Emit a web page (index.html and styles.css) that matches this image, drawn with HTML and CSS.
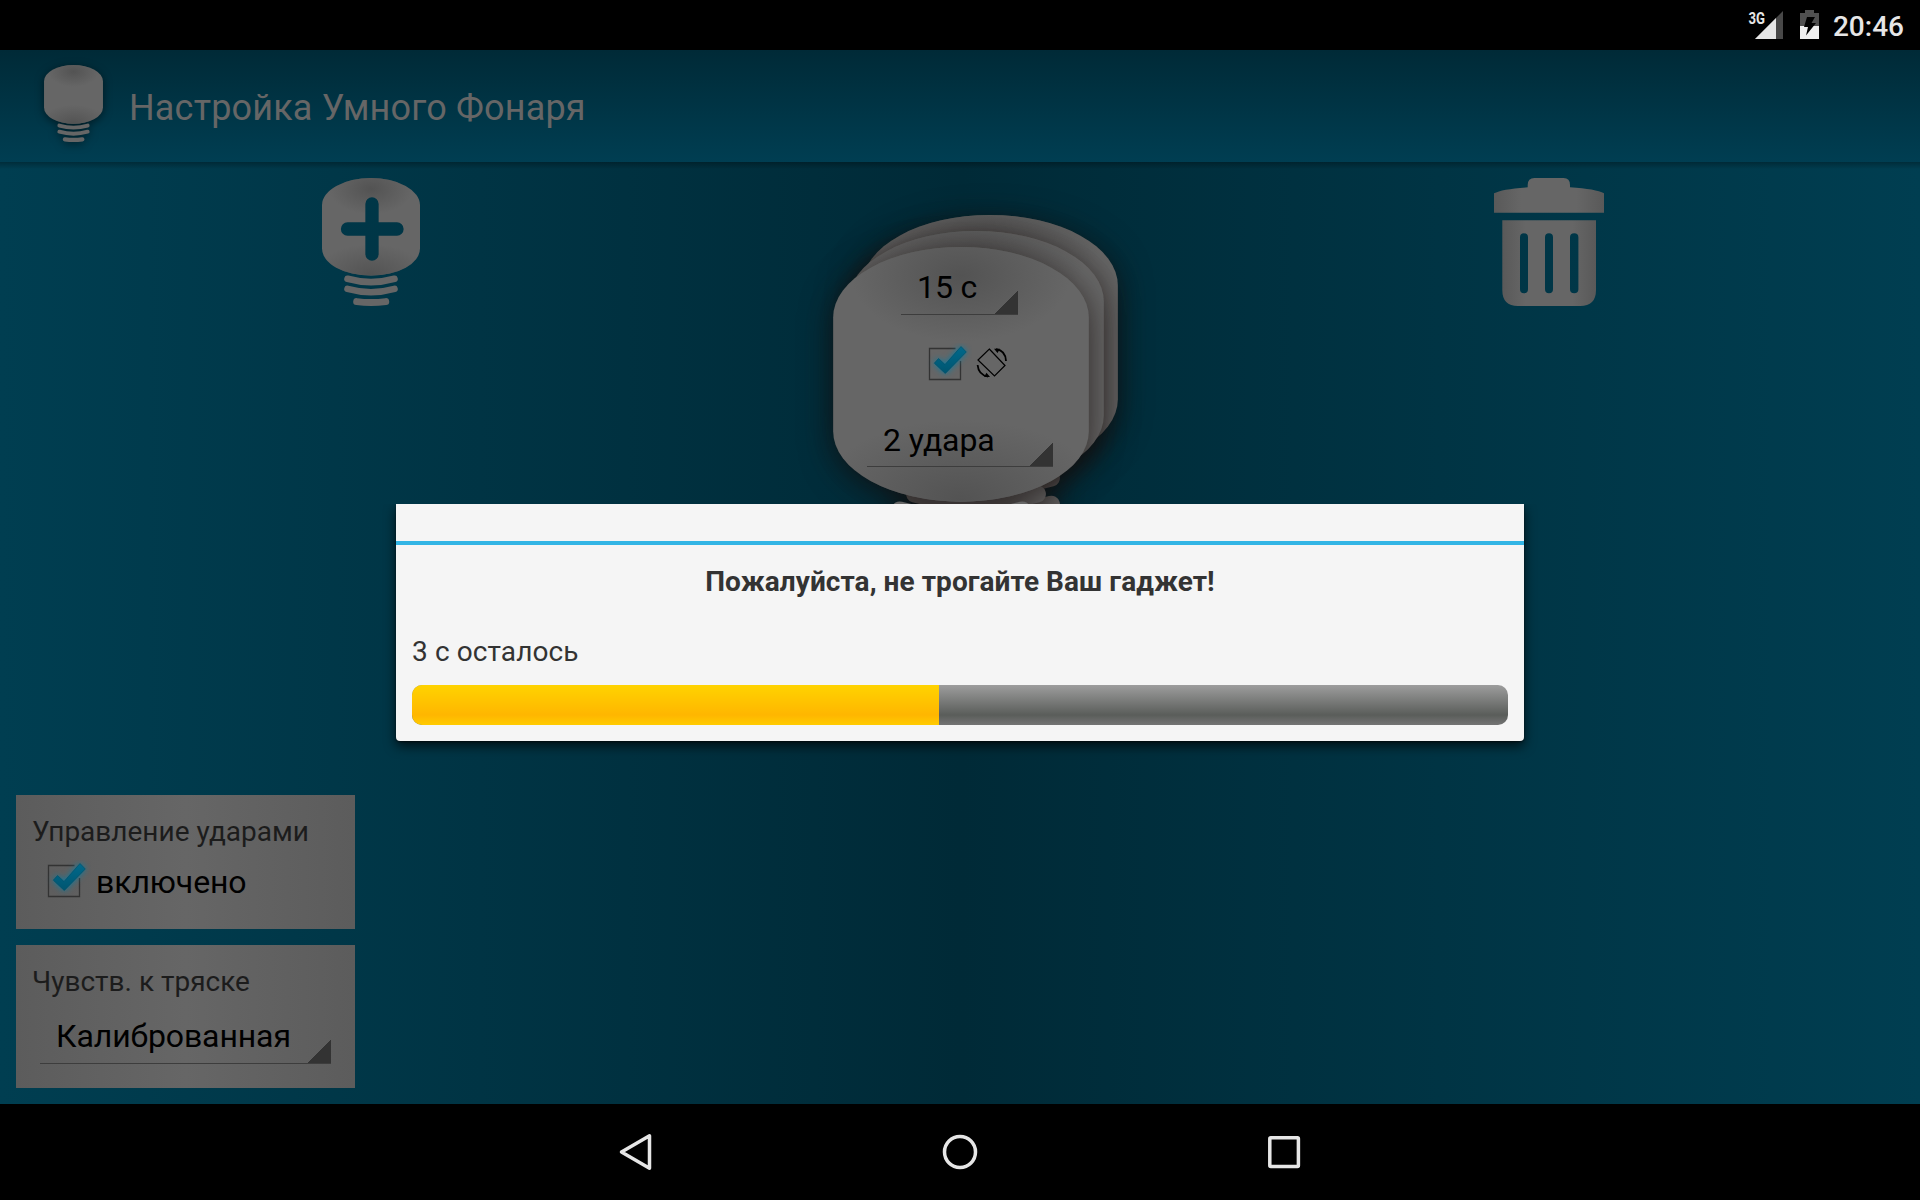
FILE: index.html
```html
<!DOCTYPE html>
<html lang="ru">
<head>
<meta charset="utf-8">
<title>Настройка Умного Фонаря</title>
<link rel="stylesheet" href="styles.css">
</head>
<body>
<svg class="defs" width="0" height="0" aria-hidden="true">
  <defs>
    <radialGradient id="glowTop" gradientUnits="userSpaceOnUse" cx="49" cy="11" r="42" gradientTransform="translate(0 4.4) scale(1 .6)"><stop offset="0" stop-color="#535353"/><stop offset="1" stop-color="#535353" stop-opacity="0"/></radialGradient>
    <radialGradient id="glowBottom" gradientUnits="userSpaceOnUse" cx="49" cy="97" r="56" gradientTransform="translate(0 43.65) scale(1 .55)"><stop offset="0" stop-color="#535353"/><stop offset="1" stop-color="#535353" stop-opacity="0"/></radialGradient>
    <linearGradient id="canShade"><stop offset="0" stop-color="#595959"/><stop offset=".25" stop-color="#666"/><stop offset=".75" stop-color="#666"/><stop offset="1" stop-color="#595959"/></linearGradient>
    <linearGradient id="tick" x1="0" y1="0" x2="0" y2="1"><stop offset="0" stop-color="#00698b"/><stop offset="1" stop-color="#005570"/></linearGradient>
    <mask id="plusCut"><rect width="98" height="130" fill="#fff"/><path d="M50 26V76M25.5 51H75" stroke="#000" stroke-width="13.3" stroke-linecap="round"/></mask>
  </defs>
  <symbol id="bulb" viewBox="0 0 98 128">
    <g fill="none" stroke="#666" stroke-linecap="round" stroke-width="6.6">
      <path d="M25.5 100.8Q49 107.4 72.5 100.8M25.5 110.9Q49 117.5 72.5 110.9"/><path d="M34.7 123.6Q49 125.4 63.7 123.6" stroke-width="7"/>
    </g>
    <path d="M0 27A49 27 0 0 1 98 27V70.600A49 27 0 0 1 0 70.600Z" fill="#666"/>
    <path d="M0 27A49 27 0 0 1 98 27V70.600A49 27 0 0 1 0 70.600Z" fill="url(#glowTop)"/>
    <path d="M0 27A49 27 0 0 1 98 27V70.600A49 27 0 0 1 0 70.600Z" fill="url(#glowBottom)"/>
  </symbol>
  <symbol id="check" viewBox="0 0 48 40">
    <path d="M31.5 5.500H5.500V36.500H36.500V18" fill="none" stroke="#333" stroke-width="1.3"/>
    <path class="tick-glow" d="M10.300 20.200L14.500 15.500L21 21.500L37 3.500L42.300 9L21.300 30.500Z" fill="url(#tick)" stroke="#00506a" stroke-width=".7"/>
  </symbol>
</svg>

<div class="screen">
  <div class="statusbar">
    <svg class="signal" width="36" height="34" viewBox="0 0 36 34">
      <path d="M7 32L35 4V32Z" fill="#484848"/><path d="M7 32L28 11V32Z" fill="#e6e6e6"/>
      <text x="0.500" y="16.500" textLength="16.500" lengthAdjust="spacingAndGlyphs">3G</text>
    </svg>
    <svg class="battery" width="19" height="29" viewBox="0 0 19 29">
      <path d="M0 3H5V0H14V3H19V16H0Z" fill="#505050"/><path d="M0 16H19V29H0Z" fill="#efefef"/>
      <path d="M7 7H15L11.500 13H16L6 25.500L8 17H4Z" fill="#000"/>
    </svg>
    <span class="clock">20:46</span>
  </div>

  <header class="appbar">
    <svg class="logo" width="59" height="77" viewBox="0 0 98 128"><use href="#bulb" width="98" height="128"/></svg>
    <h1>Настройка Умного Фонаря</h1>
  </header>

  <main class="content">
    <div class="toolbar">
      <svg class="add" width="98" height="128" viewBox="0 0 98 128"><g mask="url(#plusCut)"><use href="#bulb" width="98" height="128"/></g></svg>
      <div class="lamps">
        <svg class="lamp lamp-back" width="256" height="334"><use href="#bulb" width="256" height="334"/></svg>
        <svg class="lamp lamp-middle" width="256" height="334"><use href="#bulb" width="256" height="334"/></svg>
        <svg class="lamp lamp-front" width="256" height="334"><use href="#bulb" width="256" height="334"/></svg>
        <div class="lamp-form">
          <div class="spinner duration">15 с</div>
          <div class="rotate-row">
            <svg width="48" height="40"><use href="#check"/></svg>
            <svg class="rotate" width="32" height="32" viewBox="0 0 32 32" fill="none" stroke="#000">
              <path d="M13.300 2L29 18.500L18.500 29L2 13Z" stroke-width="1.2"/>
              <path d="M20 2.200Q29.500 3.500 30 14M12 29.500Q2.500 28 1.600 18" stroke-width="1.8"/>
              <path d="M18 1.700L24 1.700L21.500 6ZM14 30L8 30L10.500 25.800Z" fill="#000" stroke="none"/>
            </svg>
          </div>
          <div class="spinner taps">2 удара</div>
        </div>
      </div>
      <svg class="trash" width="110" height="128" viewBox="0 0 110 128" fill="url(#canShade)">
        <path d="M0 15.300Q8 11 33.700 9.300V7Q33.700 0 40.500 0H69.500Q76 0 76 7V9.300Q102 11 110 15.300V34.700H0Z"/>
        <path fill-rule="evenodd" d="M8.300 42.300H102V112Q102 128 86 128H24Q8.300 128 8.300 112ZM26 59.300V111.300a4 4 0 0 0 8 0V59.300a4 4 0 0 0-8 0ZM51 59.300V111.300a4 4 0 0 0 8 0V59.300a4 4 0 0 0-8 0ZM76 59.300V111.300a4.200 4 0 0 0 8.400 0V59.300a4.200 4 0 0 0-8.400 0Z"/>
      </svg>
    </div>

    <div class="settings">
      <section class="panel panel-taps">
        <h2>Управление ударами</h2>
        <div class="check-row"><svg width="48" height="40"><use href="#check"/></svg><span>включено</span></div>
      </section>
      <section class="panel panel-shake">
        <h2>Чувств. к тряске</h2>
        <div class="spinner sensitivity">Калиброванная</div>
      </section>
    </div>
  </main>

  <nav class="navbar">
    <svg width="40" height="40" viewBox="0 0 40 40"><path d="M5.500 20L33.500 3.800V36.200Z"/></svg>
    <svg width="40" height="40" viewBox="0 0 40 40"><circle cx="20" cy="20" r="15.500"/></svg>
    <svg width="40" height="40" viewBox="0 0 40 40"><rect x="5.800" y="5.800" width="28.600" height="28.600" rx="1"/></svg>
  </nav>

  <div class="dialog" role="dialog">
    <div class="dialog-head"></div>
    <div class="dialog-body">
      <p class="message">Пожалуйста, не трогайте Ваш гаджет!</p>
      <p class="remaining">3 с осталось</p>
      <div class="progress"><div class="progress-fill" style="width:527px"></div></div>
    </div>
  </div>
</div>
</body>
</html>
```
FILE: styles.css
```css
* { box-sizing: border-box; }
body { margin: 0; background: #000; font-family: Roboto, "Noto Sans", sans-serif; color: #000; }
h1, h2, p { margin: 0; font-weight: 400; }
svg { display: block; flex: none; }
.defs { position: absolute; }

.screen { position: relative; width: 1920px; height: 1200px; display: flex; flex-direction: column; overflow: hidden; }

/* System status bar */
.statusbar { height: 50px; flex: none; display: flex; justify-content: flex-end; align-items: flex-start; padding-right: 16px; background: #000; }
.signal { margin: 7px 16px 0 0; }
.signal text { font-size: 17px; font-weight: 700; fill: #e6e6e6; stroke: #000; stroke-width: 3px; paint-order: stroke; }
.battery { margin: 10px 14px 0 0; }
.clock { font-size: 28px; font-weight: 500; line-height: 32px; margin-top: 11px; color: #e6e6e6; }

/* Title bar */
.appbar { height: 112px; flex: none; display: flex; align-items: flex-start; padding-left: 44px; background: linear-gradient(#002a37, #003e52); }
.logo { margin-top: 15px; filter: drop-shadow(0 2px 4px rgba(0,0,0,.5)); overflow: visible; }
.appbar h1 { margin: 37px 0 0 26px; font-size: 36px; line-height: 42px; letter-spacing: .18px; color: #666; }

/* Workspace */
.content { height: 942px; flex: none; display: flex; flex-direction: column; justify-content: space-between;
  background: linear-gradient(rgba(0,0,0,.28), transparent 7px), linear-gradient(90deg, #003e51, #002a37 50%, #003e51); }
.toolbar { height: 520px; display: flex; align-items: flex-start; padding: 16px 316px 0 322px; justify-content: space-between; }
.lamps { width: 286px; display: grid; margin: 37px 0 0 38px; }
.lamp { grid-area: 1 / 1; overflow: visible; filter: drop-shadow(0 6px 16px rgba(20,12,10,.7)); }
.lamp-back { margin: 0 0 0 29px; }
.lamp-middle { margin: 16px 0 0 15px; }
.lamp-front { margin-top: 32px; }
.lamp-form { grid-area: 1 / 1; z-index: 1; width: 256px; margin-top: 32px; }
.rotate-row { display: flex; align-items: center; margin: 28px 0 0 91px; gap: 4px; }

.spinner { font-size: 32px; line-height: 36px; letter-spacing: -.1px; border-bottom: 1px solid #3d3d3d; white-space: nowrap;
  background: linear-gradient(135deg, transparent 50%, #333 50.5%) right bottom / 24px 24px no-repeat; }
.duration { width: 117px; height: 46px; margin: 22px 0 0 68px; padding-left: 16px; }
.taps { width: 186px; height: 46px; margin: 38px 0 0 34px; padding-left: 16px; line-height: 38px; }

/* Option panels */
.settings { width: 371px; padding: 0 16px 16px; display: flex; flex-direction: column; gap: 16px; }
.panel { width: 339px; background: linear-gradient(90deg, #5c5c5c, #666 50%, #5c5c5c); }
.panel-taps { height: 134px; }
.panel-shake { height: 143px; }
.panel h2 { padding: 20px 0 0 16px; font-size: 28px; line-height: 33px; color: #1c1c1c; }
.check-row { display: flex; align-items: center; margin: 11px 0 0 27px; gap: 5px; font-size: 32px; line-height: 38px; letter-spacing: -.1px; }
.check-row span { padding-top: 4px; }
.sensitivity { width: 291px; height: 46px; margin: 20px 0 0 24px; padding-left: 16px; }
.tick-glow { filter: drop-shadow(0 0 3px #087ca3); }

/* System navigation */
.navbar { height: 96px; flex: none; display: flex; justify-content: center; align-items: center; gap: 284px; background: #000; fill: none; stroke: #e6e6e6; stroke-width: 3.5; stroke-linejoin: round; }

/* Modal dialog above the dimmed workspace */
.dialog { position: absolute; z-index: 2; left: 396px; top: 504px; width: 1128px; height: 237px; background: #f5f5f5; border-radius: 0 0 4px 4px; box-shadow: 0 5px 12px rgba(0,0,0,.7), 0 1px 2px rgba(0,0,0,.5); color: #333; clip-path: inset(0 -24px -30px -24px); }
.dialog-head { height: 41px; border-bottom: 4px solid #33b5e5; }
.dialog-body { padding: 20px 16px 16px; font-size: 28px; line-height: 33px; }
.message { font-weight: 700; text-align: center; letter-spacing: .06px; }
.remaining { margin-top: 37px; letter-spacing: .1px; }
.progress { margin-top: 17px; height: 40px; border-radius: 10px; overflow: hidden; background: linear-gradient(#9d9d9d, #5a5d5a 75%, #747474); }
.progress-fill { height: 100%; background: linear-gradient(#ffd300, #ffb600 75%, #ffcb00); }
```
